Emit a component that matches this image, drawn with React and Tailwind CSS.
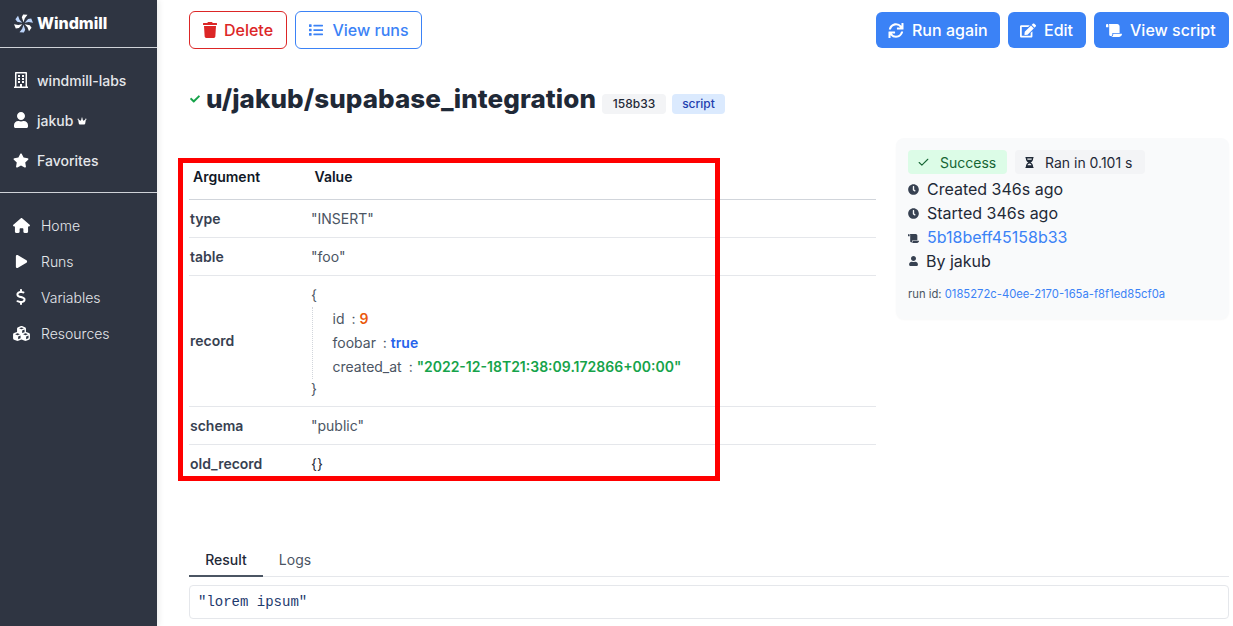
import React from 'react';
import {
  FaTrash, FaList, FaSync, FaEdit, FaScroll, FaClock, FaUser, FaStar,
  FaRegBuilding, FaCheck, FaHourglassHalf,
} from 'react-icons/fa';
import { FaHouse, FaPlay, FaDollarSign, FaCubes, FaCrown } from 'react-icons/fa6';
import { Check } from 'lucide-react';

// six alternating blades around the centre
const WindmillLogo = () => (
  <svg viewBox="0 0 20 20" className="w-[19px] h-[19px] shrink-0">
    {[0, 60, 120, 180, 240, 300].map((deg, i) => (
      <path
        key={deg}
        d="M10 8.6 L8.2 3.4 L9.6 0.4 L14.2 0.9 L11.4 4.4 Z"
        fill={i % 2 === 0 ? '#ffffff' : '#bcd4fa'}
        transform={`rotate(${deg} 10 10)`}
      />
    ))}
  </svg>
);

const topLinks = [
  { label: 'windmill-labs', icon: <FaRegBuilding className="w-[14px] h-[16px]" /> },
  { label: 'jakub', icon: <FaUser className="w-[14px] h-[16px]" />, crown: true },
  { label: 'Favorites', icon: <FaStar className="w-[16px] h-[15px]" /> },
];

const mainLinks = [
  { label: 'Home', icon: <FaHouse className="w-[17px] h-[15px]" /> },
  { label: 'Runs', icon: <FaPlay className="w-[13px] h-[15px]" /> },
  { label: 'Variables', icon: <FaDollarSign className="w-[10px] h-[16px]" /> },
  { label: 'Resources', icon: <FaCubes className="w-[17px] h-[15px]" /> },
];

const Sidebar = () => (
  <aside className="w-[157px] shrink-0 h-full bg-[#2f3542] text-white shadow-[2px_0_6px_rgba(0,0,0,0.08)]">
    <div className="h-[48px] flex items-center pl-[14px] gap-[4px] border-b border-[#cfd2d8]">
      <WindmillLogo />
      <span className="text-[16px] font-extrabold text-white mb-[2px]">Windmill</span>
    </div>
    <div className="h-[145px] pt-[12px] border-b border-[#cfd2d8]">
      {topLinks.map((l) => (
        <div key={l.label} className="h-[40px] flex items-center text-[14px] font-medium text-[#e5e7eb]">
          <span className="w-[37px] flex justify-center pl-[5px] pr-[1px] text-white">{l.icon}</span>
          <span>{l.label}</span>
          {l.crown && <FaCrown className="ml-[4px] w-[10px] h-[8px] mt-[2px] text-white" />}
        </div>
      ))}
    </div>
    <div className="pt-[14px]">
      {mainLinks.map((l) => (
        <div key={l.label} className="h-[36px] flex items-center text-[14px] font-light text-[#e5e7eb]">
          <span className="w-[41px] flex justify-center pl-[1px] text-white">{l.icon}</span>
          <span>{l.label}</span>
        </div>
      ))}
    </div>
  </aside>
);

const Row = ({ name, children, className }) => (
  <tr className="border-b border-[#e5e7eb] last:border-b-0">
    <td className={`w-[122px] pl-[1px] text-[14px] font-semibold text-[#374151] ${className}`}>{name}</td>
    <td className="text-[14px] text-[#4b5563]">{children}</td>
  </tr>
);

const ArgsTable = () => (
  <table className="w-[687px] border-collapse">
    <thead>
      <tr className="border-b border-[#d1d5db]">
        <th className="h-[42px] pb-[2px] pl-[4px] text-left text-[14px] font-semibold text-[#111827]">Argument</th>
        <th className="pb-[2px] pl-[3.5px] text-left text-[14px] font-semibold text-[#111827]">Value</th>
      </tr>
    </thead>
    <tbody>
      <Row name="type" className="h-[38px]">"INSERT"</Row>
      <Row name="table" className="h-[38px]">"foo"</Row>
      <Row name="record" className="h-[131px]">
        <div className="leading-[24px]">{'{'}</div>
        <div className="border-l border-dotted border-[#d1d5db] ml-[1px] pl-[19.5px]">
          <div className="leading-[24px]">id <span className="ml-[3px]">:</span> <span className="font-semibold text-[#ea580c]">9</span></div>
          <div className="leading-[24px]">foobar <span className="ml-[3px]">:</span> <span className="font-semibold text-[#2563eb]">true</span></div>
          <div className="leading-[24px]">created_at <span className="ml-[3px]">:</span> <span className="font-semibold text-[#16a34a]">"2022-12-18T21:38:09.172866+00:00"</span></div>
        </div>
        <div className="leading-[20px]">{'}'}</div>
      </Row>
      <Row name="schema" className="h-[38px]">"public"</Row>
      <Row name="old_record" className="h-[38px]"><span className="text-[#1f2937]">{'{}'}</span></Row>
    </tbody>
  </table>
);

const InfoPanel = () => (
  <div className="w-[333px] h-[181px] ml-[20px] rounded-lg bg-[#f9fafb] shadow-[0_1px_2px_rgba(0,0,0,0.03)] px-[12px] pt-[12px] text-[#1f2937]">
    <div className="flex gap-[8px] text-[14px]">
      <span className="h-[24px] w-[99px] rounded bg-[#dcfce7] text-[#166534] flex items-center pl-[9px] gap-[10px]">
        <Check className="w-[13px] h-[13px] mt-[1px]" />Success
      </span>
      <span className="h-[24px] w-[130px] rounded bg-[#f3f4f6] text-[#1f2937] flex items-center pl-[10px] gap-[11px]">
        <FaHourglassHalf className="w-[9px] h-[11px] mt-[1px]" />Ran in 0.101 s
      </span>
    </div>
    <div className="mt-[3px] text-[16px] leading-[24px]">
      <div className="flex items-center gap-[8px]"><FaClock className="w-[11px] h-[11px] text-[#374151]" />Created 346s ago</div>
      <div className="flex items-center gap-[8px]"><FaClock className="w-[11px] h-[11px] text-[#374151]" />Started 346s ago</div>
      <div className="flex items-center gap-[8px]"><FaScroll className="w-[11px] h-[9px] text-[#374151] mt-[2px]" /><span className="text-[#3b82f6]">5b18beff45158b33</span></div>
      <div className="flex items-center gap-[8px]"><FaUser className="w-[9px] h-[10px] ml-[1px] text-[#374151]" />By jakub</div>
    </div>
    <div className="mt-[14px] text-[11.25px] leading-[15px] text-[#4b5563]">
      run id: <span className="text-[#3b82f6]">0185272c-40ee-2170-165a-f8f1ed85cf0a</span>
    </div>
  </div>
);

const ActionButton = ({ icon, children, className }) => (
  <button className={`h-[36px] pl-[12px] rounded-md bg-[#3b82f6] text-white text-[16px] font-medium flex items-center gap-[8px] ${className}`}>
    {icon}{children}
  </button>
);

export default function App() {
  return (
    <div className="relative flex w-full h-screen overflow-hidden bg-white antialiased font-['Inter',sans-serif]">
      <Sidebar />
      <main className="flex-1 pl-[32px] pr-[4px]">
        <div className="flex justify-between pt-[11px]">
          <div className="flex gap-[8px]">
            <button className="h-[38px] w-[98px] rounded-md border border-[#dc2626] text-[#dc2626] text-[16px] font-medium flex items-center justify-center gap-[7px]">
              <FaTrash className="w-[14px] h-[16px]" />Delete
            </button>
            <button className="h-[38px] w-[127px] rounded-md border border-[#3b82f6] text-[#3b82f6] text-[16px] font-medium flex items-center justify-center gap-[8px]">
              <FaList className="w-[16px] h-[14px]" />View runs
            </button>
          </div>
          <div className="flex gap-[8px] h-[36px] mt-px">
            <ActionButton className="w-[124px]" icon={<FaSync className="w-[16px] h-[15px]" />}>Run again</ActionButton>
            <ActionButton className="w-[78px]" icon={<FaEdit className="w-[16px] h-[15px]" />}>Edit</ActionButton>
            <ActionButton className="w-[135px]" icon={<FaScroll className="w-[16px] h-[13px]" />}>View script</ActionButton>
          </div>
        </div>

        <div className="flex items-center mt-[31px] h-[36px]">
          <FaCheck className="ml-px w-[10px] h-[10px] text-[#16a34a] mt-[2px]" />
          <h1 className="ml-[6px] text-[26px] font-extrabold tracking-[0.07px] text-[#1f2937]">u/jakub/supabase_integration</h1>
          <span className="ml-[6px] mt-[11px] h-[20px] w-[64px] rounded bg-[#f3f4f6] text-[#1f2937] text-[12px] font-medium flex items-center justify-center">158b33</span>
          <span className="ml-[6px] mt-[11px] h-[20px] w-[53px] rounded bg-[#dbeafe] text-[#1e40af] text-[12px] font-medium flex items-center justify-center">script</span>
        </div>

        <div className="flex mt-[22px]">
          <div className="pt-[19px]">
            <ArgsTable />
          </div>
          <InfoPanel />
        </div>

        <div className="mt-[66px] flex h-[29px] border-b border-[#e5e7eb] text-[14px]">
          <div className="w-[74px] h-[29px] border-b-2 border-[#4b5563] text-[#1f2937] font-medium flex items-center justify-center pb-[5px]">Result</div>
          <div className="w-[64px] text-[#4b5563] flex items-center justify-center pb-[5px]">Logs</div>
        </div>
        <div className="mt-[8px] h-[34px] rounded border border-[#e5e7eb] px-[8px] flex items-center font-['Liberation_Mono',monospace] text-[14px] text-[#1e3a6e]">
          "lorem ipsum"
        </div>
      </main>
      {/* red annotation box sitting on top of the table */}
      <div className="absolute left-[178px] top-[158px] w-[542px] h-[323px] border-[5px] border-[#ff0000] pointer-events-none" />
    </div>
  );
}
